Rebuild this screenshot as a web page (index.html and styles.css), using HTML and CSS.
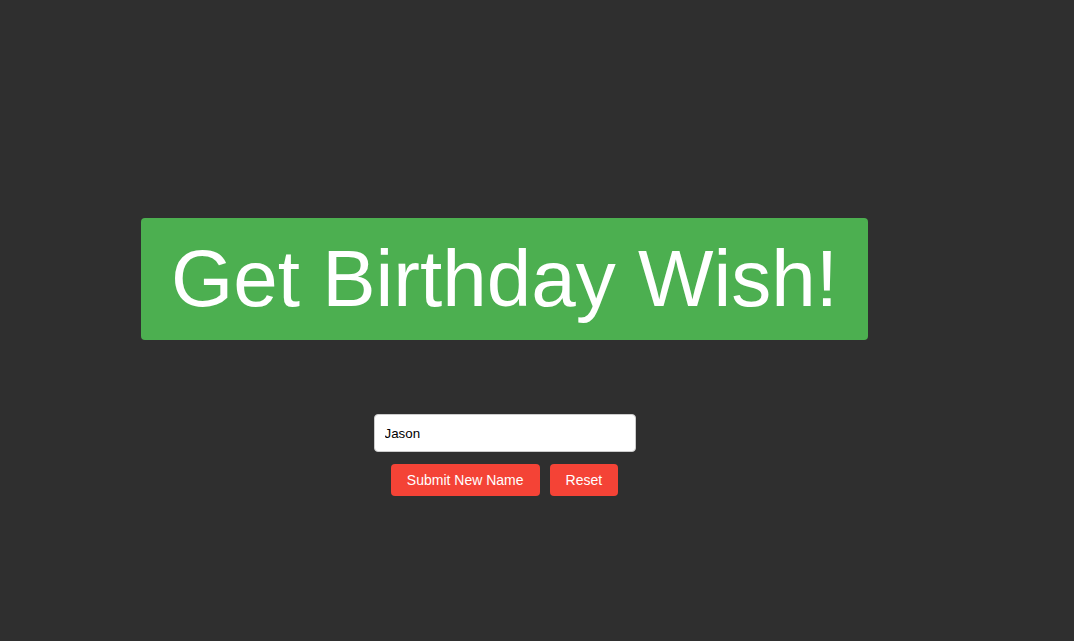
FILE: index.html
```html
<!DOCTYPE html>
<html>
<head>
<meta charset="utf-8">
<link rel="stylesheet" href="styles.css">
</head>
<body>
<main class="page">
  <button class="wish">Get Birthday Wish!</button>
  <form class="name-form">
    <input class="name-input" type="text" value="Jason">
    <div class="actions">
      <button type="button" class="btn">Submit New Name</button>
      <button type="button" class="btn">Reset</button>
    </div>
  </form>
</main>
</body>
</html>
```

FILE: styles.css
```css
html, body {
  margin: 0;
  background: #2f2f2f;
  font-family: "Liberation Sans", Arial, sans-serif;
}
.page {
  width: 1009px;
  padding-top: 218px;
  display: flex;
  flex-direction: column;
  align-items: center;
}
.wish {
  font-family: "Liberation Sans", Arial, sans-serif;
  font-size: 80px;
  line-height: 92px;
  color: #fff;
  background: #4caf50;
  border: none;
  border-radius: 4px;
  padding: 15px 30px;
  margin: 0 0 74px;
  cursor: pointer;
}
.name-form {
  display: flex;
  flex-direction: column;
  align-items: center;
  gap: 12px;
  margin: 0;
}
.name-input {
  box-sizing: border-box;
  width: 262px;
  height: 38px;
  padding: 0 10px;
  border: 1px solid #ccc;
  border-radius: 4px;
  background: #fff;
  font-family: "Liberation Sans", Arial, sans-serif;
  font-size: 13.33px;
  color: #000;
}
.actions {
  display: flex;
  gap: 10px;
}
.btn {
  font-family: "Liberation Sans", Arial, sans-serif;
  font-size: 14px;
  line-height: 16px;
  padding: 8px 16px;
  color: #fff;
  background: #f44336;
  border: none;
  border-radius: 4px;
  cursor: pointer;
}
```
